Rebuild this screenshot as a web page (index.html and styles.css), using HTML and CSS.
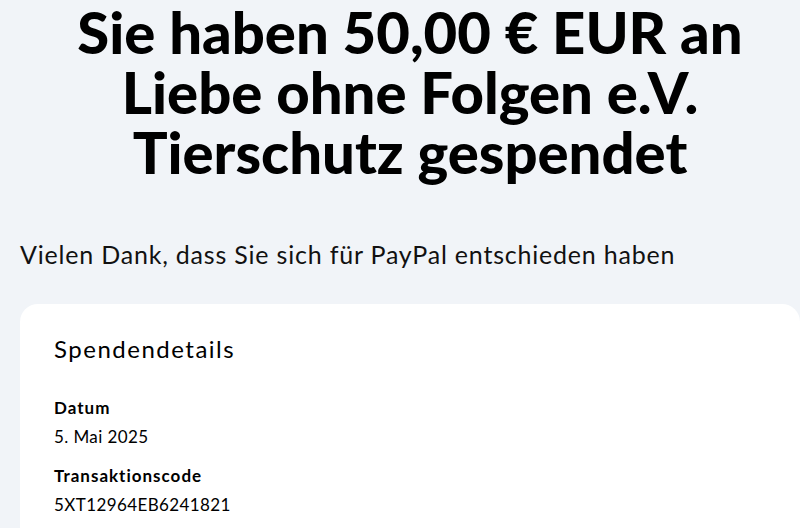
FILE: index.html
```html
<!DOCTYPE html>
<html lang="de">
<head>
  <meta charset="UTF-8">
  <meta name="viewport" content="width=device-width, initial-scale=1.0">
  <title>Spende erfolgreich</title>
  <link rel="stylesheet" href="styles.css">
</head>
<body>
  <main class="page">
    <h1 class="headline">Sie haben 50,00 € EUR an Liebe ohne Folgen e.V. Tierschutz gespendet</h1>

    <p class="thanks">Vielen Dank, dass Sie sich für PayPal entschieden haben</p>

    <section class="card">
      <h2>Spendendetails</h2>

      <div class="detail">
        <span class="label">Datum</span>
        <span class="value">5. Mai 2025</span>
      </div>

      <div class="detail">
        <span class="label">Transaktionscode</span>
        <span class="value">5XT12964EB6241821</span>
      </div>
    </section>
  </main>
</body>
</html>
```

FILE: styles.css
```css
body {
  margin: 0;
  padding: 0;
  background: #f1f4f8;
  color: #000;
  font-family: Lato, "Open Sans", sans-serif;
}

.page {
  padding: 0 0 0 20px;
}

.headline {
  margin: 0 auto;
  padding-top: 2px;
  max-width: 700px;
  font-size: 58px;
  font-weight: 900;
  line-height: 60px;
  text-align: center;
}

.thanks {
  margin: 56px 0 0;
  font-size: 25px;
  line-height: 32px;
  letter-spacing: 0.8px;
  color: #111;
}

.card {
  margin-top: 34px;
  background: #fff;
  border-radius: 18px 18px 0 0;
  padding: 31px 34px 20px;
  min-height: 190px;
}

.card h2 {
  margin: 0 0 30px;
  font-size: 24px;
  font-weight: 400;
  line-height: 28px;
  letter-spacing: 1.5px;
}

.detail {
  display: flex;
  flex-direction: column;
  margin-bottom: 10px;
}

.label {
  font-size: 17px;
  font-weight: 700;
  line-height: 29px;
  letter-spacing: 1px;
}

.value {
  font-size: 17px;
  line-height: 29px;
  letter-spacing: 0.4px;
}
```
